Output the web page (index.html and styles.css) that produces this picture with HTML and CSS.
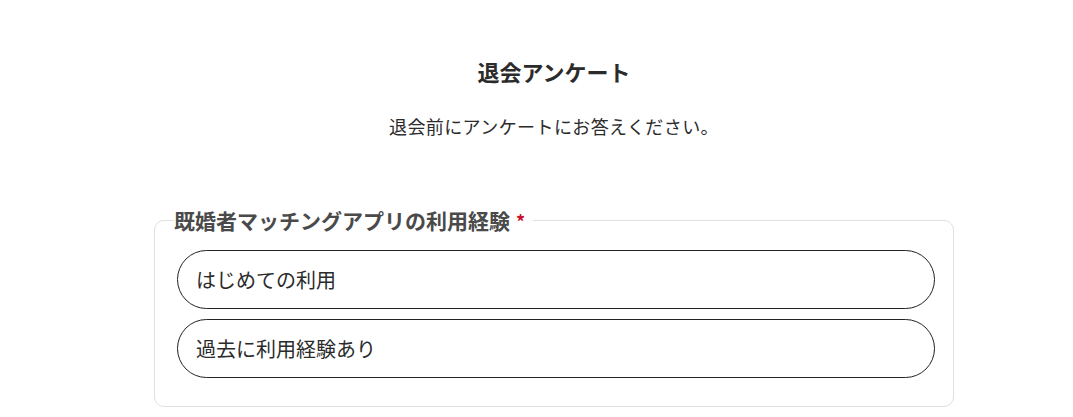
FILE: index.html
```html
<!DOCTYPE html>
<html lang="ja">
<head>
	<meta charset="UTF-8">
	<title>退会アンケート</title>
	<link rel="stylesheet" href="styles.css">
</head>
<body>
	<div id="container">
		<!-- 見出し -->
		<h1 class="title">退会アンケート</h1>
		<p class="lead">退会前にアンケートにお答えください。</p>
		<!-- 設問 -->
		<form action="" method="post">
			<fieldset class="question">
				<legend>既婚者マッチングアプリの利用経験<span class="req">*</span></legend>
				<label class="option"><input type="radio" name="exp" value="1">はじめての利用</label>
				<label class="option"><input type="radio" name="exp" value="2">過去に利用経験あり</label>
			</fieldset>
		</form>
	</div>
</body>
</html>
```

FILE: styles.css
```css
/*reset*/
body, h1, p, form, fieldset, legend{
	margin: 0;
	padding: 0;
}
body{
	font: 18px/1.5 "Noto Sans CJK JP", "Noto Sans", sans-serif;
	color: #333;
	background: #fff;
}
/*main*/
#container{
	width: 800px;
	margin-left: 154px;
	padding-top: 55px;
}
.title{
	font-size: 22px;
	font-weight: bold;
	line-height: 32px;
	text-align: center;
	color: #2b2b2b;
}
.lead{
	margin-top: 26px;
	font-size: 18px;
	line-height: 26px;
	letter-spacing: 0.4px;
	text-align: center;
	color: #2b2b2b;
}
/*設問*/
.question{
	margin-top: 66px;
	padding: 14px 18px 28px 22px;
	border: 1px solid #e0e0e0;
	border-radius: 10px;
}
.question legend{
	margin-left: -3px;
	padding: 0 8px 0 0;
	font-size: 21px;
	font-weight: bold;
	line-height: 30px;
	color: #4a4a4a;
}
.req{
	margin-left: 6px;
	color: #c8102e;
	font-size: 18px;
}
.option{
	display: flex;
	align-items: center;
	height: 57px;
	padding: 0 18px;
	border: 1px solid #222;
	border-radius: 30px;
	font-size: 20px;
	color: #2b2b2b;
	cursor: pointer;
}
.option + .option{
	margin-top: 10px;
}
.option input{
	display: none;
}
```
